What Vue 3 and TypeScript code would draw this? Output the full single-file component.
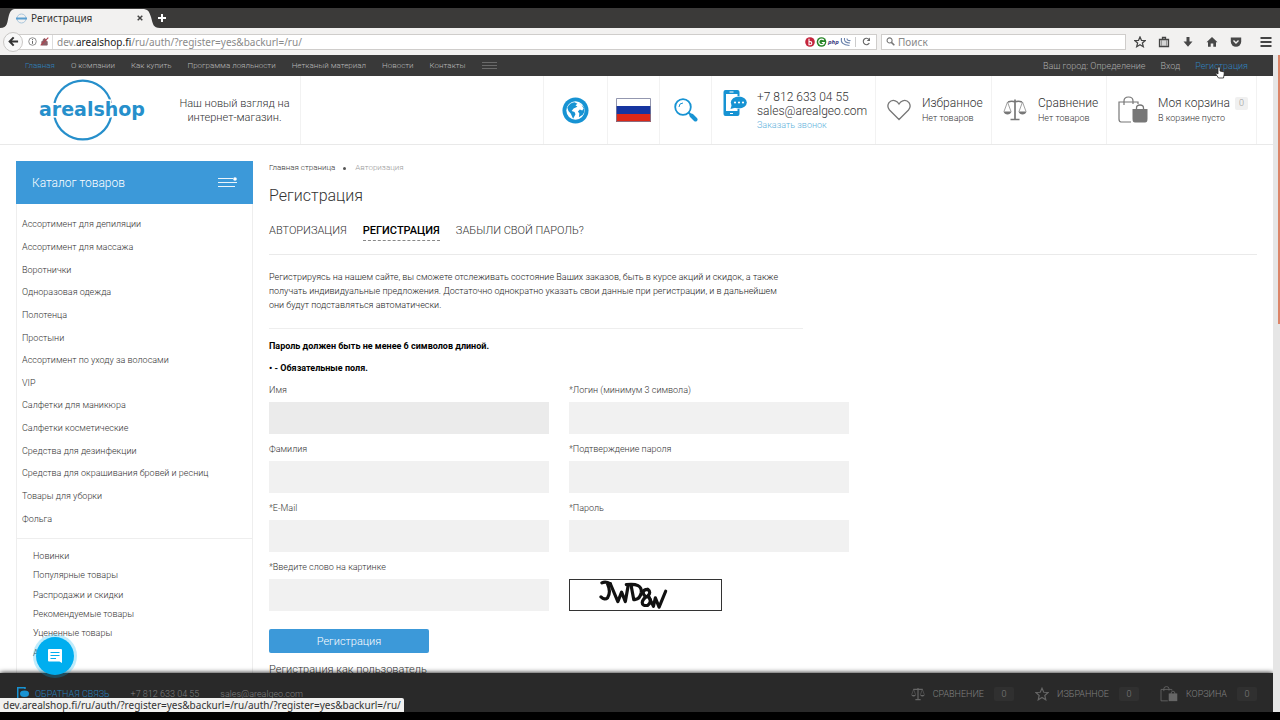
<script setup lang="ts">
interface Field {
  id: string
  label: string
  type: string
}

const menu: string[] = ['О компании', 'Как купить', 'Программа лояльности', 'Нетканый материал', 'Новости', 'Контакты']
const catalog: string[] = [
  'Ассортимент для депиляции', 'Ассортимент для массажа', 'Воротнички', 'Одноразовая одежда', 'Полотенца',
  'Простыни', 'Ассортимент по уходу за волосами', 'VIP', 'Салфетки для маникюра', 'Салфетки косметические',
  'Средства для дезинфекции', 'Средства для окрашивания бровей и ресниц', 'Товары для уборки', 'Фольга',
]
const collections: string[] = ['Новинки', 'Популярные товары', 'Распродажи и скидки', 'Рекомендуемые товары', 'Уцененные товары', 'Акции']
const fields: Field[] = [
  { id: 'name', label: 'Имя', type: 'text' },
  { id: 'login', label: '*Логин (минимум 3 символа)', type: 'text' },
  { id: 'surname', label: 'Фамилия', type: 'text' },
  { id: 'confirm', label: '*Подтверждение пароля', type: 'password' },
  { id: 'email', label: '*E-Mail', type: 'email' },
  { id: 'password', label: '*Пароль', type: 'password' },
  { id: 'captcha', label: '*Введите слово на картинке', type: 'text' },
]
</script>

<template>
  <div class="screen">
    <div class="tabs">
      <div class="tab">
        <svg class="tab-shape" viewBox="0 0 160 20" preserveAspectRatio="none"><path d="M0 20C8 20 7 14 9 7C11 1 13 1 18 1H142C148 1 149 3 151 9C153 16 153 20 160 20Z" fill="#f2f1f0" /></svg>
        <svg class="favicon" viewBox="0 0 11 11"><circle cx="5.5" cy="5.5" r="4.5" fill="none" stroke="#a9c6dc" /><path d="M0 5.5H11" stroke="#5b9fd0" stroke-width="2" /></svg>
        <span class="tab-title">Регистрация</span>
        <button class="tab-close" aria-label="Закрыть"><svg viewBox="0 0 6 6"><path d="M.7 .7L5.3 5.3M5.3 .7L.7 5.3" stroke="#444" stroke-width="1.5" /></svg></button>
      </div>
      <button class="tab-add" aria-label="Новая вкладка"><svg viewBox="0 0 8 8"><path d="M4 0V8M0 4H8" stroke="#fff" stroke-width="2" /></svg></button>
    </div>

    <div class="toolbar">
      <button class="back" aria-label="Назад"><svg viewBox="0 0 12 12"><path d="M6.2 1.5L1.8 6L6.2 10.5M2 6H11" fill="none" stroke="#333" stroke-width="2.2" /></svg></button>
      <div class="address">
        <svg class="i9" viewBox="0 0 10 10"><circle cx="5" cy="5" r="4.2" fill="none" stroke="#777" stroke-width=".9" /><path d="M5 4.3V7.6M5 2.3V3.4" stroke="#666" stroke-width="1.1" /></svg>
        <svg class="i9" viewBox="0 0 10 10"><path d="M2 5H8V9H2ZM3.4 5V3Q5 .5 6.6 3V5" fill="#8b6068" stroke="#8b6068" /><path d="M.8 9.2L9.2 .8" stroke="#b33f4b" stroke-width="1.2" /></svg>
        <span class="url">dev.<b>arealshop.fi</b>/ru/auth/?register=yes&amp;backurl=/ru/</span>
        <svg class="plugins" viewBox="0 0 46 10">
          <circle cx="5" cy="5" r="4.8" fill="#c4243c" /><path d="M4 1.8V7.8H5.2A1.5 1.5 0 0 0 5.2 4.6H4" fill="none" stroke="#fff" stroke-width="1.1" />
          <circle cx="16.5" cy="5" r="4.8" fill="#268526" /><path d="M18.8 3.2A2.8 2.8 0 1 0 19.3 5.5H16.8" fill="none" stroke="#fff" stroke-width="1.2" />
          <text x="23" y="7" font-size="6" font-style="italic" font-weight="bold" fill="#3b3b82">php</text>
          <path d="M36.5 1Q35 8 44.5 8.5M39.5 1Q38.5 6 45 6M42 1.5Q42 4 45.5 3.5" fill="none" stroke="#6b83ac" stroke-width="1.1" />
        </svg>
        <i class="rule"></i>
        <button class="reload" aria-label="Обновить"><svg viewBox="0 0 9 9"><path d="M7 2.5A3.2 3.2 0 1 0 7.3 6" fill="none" stroke="#666" stroke-width="1.1" /><path d="M8 .5V4H4.8Z" fill="#666" /></svg></button>
      </div>
      <label class="search">
        <svg viewBox="0 0 10 10"><circle cx="4" cy="3.8" r="2.8" fill="none" stroke="#777" stroke-width="1.2" /><path d="M6 6L9.3 9.2" stroke="#777" stroke-width="1.7" /></svg>
        <input type="text" placeholder="Поиск" aria-label="Поиск" />
      </label>
      <div class="tools">
        <button aria-label="Закладки"><svg viewBox="0 0 12 12"><path d="M6 1L7.5 4.4L11.2 4.7L8.4 7.1L9.3 10.7L6 8.8L2.7 10.7L3.6 7.1L.8 4.7L4.5 4.4Z" fill="none" stroke="#444" stroke-width="1.3" /></svg></button>
        <button aria-label="Библиотека"><svg viewBox="0 0 12 12"><path d="M1.5 3.5H10.5V10.5H1.5ZM4.5 3.5V1.500H7.5V3.5" fill="#d5d5d5" stroke="#444" stroke-width="1.3" /><path d="M3.5 4V10M8.5 4V10" stroke="#888" stroke-width=".8" /></svg></button>
        <button aria-label="Загрузки"><svg viewBox="0 0 12 12"><path d="M4.5 1H7.5V5.5H10.5L6 10.8L1.5 5.5H4.5Z" fill="#484848" /></svg></button>
        <button aria-label="Домой"><svg viewBox="0 0 12 12"><path d="M6 1L11.5 6.3H10V10.8H7.3V7.5H4.7V10.8H2V6.3H.5Z" fill="#484848" /></svg></button>
        <button aria-label="Pocket"><svg viewBox="0 0 12 12"><path d="M.8 1.5H11.2V5.5A5.2 5.2 0 0 1 .8 5.5Z" fill="#484848" /><path d="M3.5 4.5L6 7L8.5 4.5" fill="none" stroke="#f2f1f0" stroke-width="1.4" /></svg></button>
        <button class="menu-button" aria-label="Меню"><svg viewBox="0 0 12 12"><path d="M.5 2H11.5M.5 6H11.5M.5 10H11.5" stroke="#444" stroke-width="1.8" /></svg></button>
      </div>
    </div>

    <div class="viewport">
      <div class="site">
        <nav class="topnav">
          <div class="pages">
            <a href="#" class="active">Главная</a>
            <a v-for="item in menu" :key="item" href="#">{{ item }}</a>
            <button class="more" aria-label="Ещё"><svg viewBox="0 0 15 9"><path d="M0 1.5H15M0 4.5H15M0 7.5H15" stroke="#777" stroke-width=".8" /></svg></button>
          </div>
          <span class="city">Ваш город: <a href="#">Определение</a></span>
          <a href="#">Вход</a>
          <a href="#" class="register">Регистрация
            <svg class="pointer" viewBox="0 0 10 13"><path d="M3 8V1.5Q4 0 5 1.5V5L8.5 5.8Q9.6 6.2 9.2 8L8.5 12H3.5L.8 8Q.5 6.5 2 7.2Z" fill="#fff" stroke="#222" stroke-width=".8" /></svg>
          </a>
        </nav>

        <header class="header">
          <a href="#" class="logo" aria-label="arealshop">
            <svg viewBox="0 0 110 64">
              <path d="M15.5 25A29 29 0 0 1 72 25M15.5 39A29 29 0 0 0 72 39" fill="none" stroke="#268fcb" stroke-width="2.2" />
              <text x="0" y="38" font-size="19" class="logo-text">arealshop</text>
            </svg>
          </a>
          <p class="slogan">Наш новый взгляд на интернет-магазин.</p>
          <button class="cell globe" aria-label="Язык"><svg viewBox="0 0 28 28"><circle cx="14" cy="14" r="13.5" fill="#1793d3" /><circle cx="14" cy="14" r="9.5" fill="#fff" /><path d="M5.5 11Q8 6 13 5.5L16 7L14 8.5L16 10L12 12L10 14.5L13 15.5L14 18L11.5 22.5Q10 19 9 17Q6 15 5.5 11ZM17 6L20 8L22.5 12L21 14L18.5 13L16.5 15L18 17L17.5 21L21.5 18.5A9 9 0 0 0 22.5 10Z" fill="#1793d3" /></svg></button>
          <button class="cell flag" aria-label="Русский"><svg viewBox="0 0 35 24"><path d="M0 0H35V8H0Z" fill="#fff" /><path d="M0 8H35V16H0Z" fill="#1635a0" /><path d="M0 16H35V24H0Z" fill="#dd2817" /><path d="M.5 .5H34.5V23.5H.5Z" fill="none" stroke="#777c9a" stroke-width=".8" /></svg></button>
          <button class="cell find" aria-label="Поиск по сайту"><svg viewBox="0 0 24 24"><circle cx="9" cy="9" r="7.8" fill="none" stroke="#1793d3" stroke-width="1.8" /><path d="M5 9A4 4 0 0 1 9 5" fill="none" stroke="#1793d3" /><path d="M14.5 14.5L17 17" stroke="#1793d3" stroke-width="2" /><path d="M17.5 17.5L21.5 21.5" stroke="#1793d3" stroke-width="4" stroke-linecap="round" /></svg></button>
          <div class="cell phone">
            <svg viewBox="0 0 24 28"><path d="M2.5 1H14.5Q16.5 1 16.5 3V7H14.5V5H3V22H14.5V20H16.5V25Q16.5 27 14.5 27H2.5Q.5 27 .5 25V3Q.5 1 2.5 1Z" fill="#1793d3" /><path d="M6.5 3H10.5M7 24.5H10" stroke="#fff" /><ellipse cx="15.8" cy="13.5" rx="8" ry="6" fill="#1793d3" /><path d="M9 15L7.5 20L13 18.5Z" fill="#1793d3" /><circle cx="12" cy="13.5" r="1.1" fill="#fff" /><circle cx="16" cy="13.5" r="1.1" fill="#fff" /><circle cx="20" cy="13.5" r="1.1" fill="#fff" /></svg>
            <div><span>+7 812 633 04 55</span><span>sales@arealgeo.com</span><a href="#">Заказать звонок</a></div>
          </div>
          <a href="#" class="cell fav">
            <svg viewBox="0 0 24 22"><path d="M12 20.5L2.5 11Q-.5 7.5 2 3.7Q4.5 .5 8.3 1.8Q10.5 2.5 12 5Q13.5 2.5 15.7 1.8Q19.5 .5 22 3.7Q24.5 7.5 21.5 11Z" fill="none" stroke="#777" stroke-width="1.3" /></svg>
            <span class="info"><b>Избранное</b><small>Нет товаров</small></span>
          </a>
          <a href="#" class="cell cmp">
            <svg viewBox="0 0 24 22"><path d="M12 .5V20M5 3Q9 1.5 12 3Q15 1.5 19 3M7.5 20.5H16.5" fill="none" stroke="#777" stroke-width="1.7" /><path d="M4.5 3L1 12.5M4.5 3L8 12.5M19.5 3L16 12.5M19.5 3L23 12.5" stroke="#888" stroke-width=".8" /><path d="M.5 12.5H8.5Q7.5 15.5 4.5 15.5Q1.5 15.5 .5 12.5ZM15.5 12.5H23.5Q22.5 15.5 19.5 15.5Q16.5 15.5 15.5 12.5Z" fill="#777" /></svg>
            <span class="info"><b>Сравнение</b><small>Нет товаров</small></span>
          </a>
          <a href="#" class="cell cart">
            <svg viewBox="0 0 30 28"><path d="M13 26H3Q1 26 1 23V6H20V8M6 9V5Q6 1 10.5 1Q15 1 15 5V8" fill="none" stroke="#777" stroke-width="1.2" /><path d="M14.5 13H29.5V23Q29.5 26.5 27 26.5H17Q14.5 26.5 14.5 23Z" fill="#777" /><path d="M18.5 15V12Q18.5 9 22 9Q25.5 9 25.5 12V15" fill="none" stroke="#777" stroke-width="1.3" /></svg>
            <span class="info"><b>Моя корзина</b><small>В корзине пусто</small></span>
            <span class="zero">0</span>
          </a>
        </header>

        <div class="body">
          <aside class="side">
            <button class="side-head">Каталог товаров
              <svg viewBox="0 0 19 11"><path d="M0 1.5H15M0 5.5H19M0 9.5H17" stroke="#fff" stroke-width=".9" /><circle cx="17" cy="2" r="1.8" fill="#fff" /></svg>
            </button>
            <ul class="catalog"><li v-for="item in catalog" :key="item"><a href="#">{{ item }}</a></li></ul>
            <ul class="collections"><li v-for="item in collections" :key="item"><a href="#">{{ item }}</a></li></ul>
          </aside>

          <main class="main">
            <div class="crumbs"><a href="#">Главная страница</a><i></i><span>Авторизация</span></div>
            <h1>Регистрация</h1>
            <div class="auth-tabs"><a href="#">АВТОРИЗАЦИЯ</a><a href="#" class="current">РЕГИСТРАЦИЯ</a><a href="#">ЗАБЫЛИ СВОЙ ПАРОЛЬ?</a></div>
            <p class="intro">Регистрируясь на нашем сайте, вы сможете отслеживать состояние Ваших заказов, быть в курсе акций и скидок, а также получать индивидуальные предложения. Достаточно однократно указать свои данные при регистрации, и в дальнейшем они будут подставляться автоматически.</p>
            <p class="note">Пароль должен быть не менее 6 символов длиной.</p>
            <p class="note">• - Обязательные поля.</p>
            <form class="form" @submit.prevent>
              <div v-for="field in fields" :key="field.id" class="field">
                <label :for="field.id">{{ field.label }}</label>
                <input :id="field.id" :type="field.type" :class="{ focused: field.id === 'name' }" />
              </div>
              <div class="captcha">
                <svg viewBox="0 0 153 32" role="img" aria-label="Captcha">
                  <g fill="none" stroke="#111" stroke-width="3.4" stroke-linecap="round" stroke-linejoin="round">
                    <path d="M30 3Q34 1 39 4M36 4Q40 13 36 19Q33 22 29 18" />
                    <path d="M39 4L47 23L51 13L55 23L58 6" />
                    <path d="M61 5L64 21M56 5Q73 3 72 13Q71 20 65 21" />
                    <path d="M79 10Q74 10 74 14Q75 18 80 18Q84 23 79 27Q73 28 73 24Q74 19 79 17Q83 13 79 10" />
                    <path d="M80 18L85 28L87 19L91 29L98 12" />
                  </g>
                </svg>
              </div>
              <button class="submit" type="submit">Регистрация</button>
            </form>
            <h2>Регистрация как пользователь</h2>
          </main>
        </div>

        <footer class="dock">
          <a href="#" class="feedback"><svg viewBox="0 0 24 28"><path d="M16 4V1.5H1.5V26.5H16V22" fill="none" stroke="#1793d3" stroke-width="3" /><ellipse cx="15" cy="13.5" rx="9" ry="6.5" fill="#1793d3" /></svg>ОБРАТНАЯ СВЯЗЬ</a>
          <span>+7 812 633 04 55</span>
          <span>sales@arealgeo.com</span>
          <a href="#" class="dock-first"><svg viewBox="0 0 24 22"><path d="M12 .5V20M4 3H20M7.5 20.5H16.5" fill="none" stroke="#666" stroke-width="2" /><path d="M4.5 3L1 12.5M4.5 3L8 12.5M19.5 3L16 12.5M19.5 3L23 12.5" stroke="#666" /><path d="M.5 12.5H8.5Q4.5 18 .5 12.5ZM15.5 12.5H23.5Q19.5 18 15.5 12.5Z" fill="#666" /></svg>СРАВНЕНИЕ<em>0</em></a>
          <a href="#"><svg viewBox="0 0 24 24"><path d="M12 2L15 9L22.5 9.5L16.8 14.5L18.5 22L12 18L5.5 22L7.2 14.5L1.5 9.5L9 9Z" fill="none" stroke="#666" stroke-width="2" /></svg>ИЗБРАННОЕ<em>0</em></a>
          <a href="#"><svg class="dock-bag" viewBox="0 0 30 28"><path d="M13 26H1V6H20V8M6 9V5Q6 1 10.5 1Q15 1 15 5V8" fill="none" stroke="#666" stroke-width="1.5" /><path d="M14.5 13H29.5V26.5H14.5Z" fill="#666" /><path d="M18.5 14Q18.5 9 22 9Q25.5 9 25.5 14" fill="none" stroke="#666" stroke-width="1.5" /></svg>КОРЗИНА<em>0</em></a>
        </footer>
        <button class="chat" aria-label="Чат"><svg viewBox="0 0 14 14"><path d="M1 0H13Q14 0 14 1V14L11.5 12.5H1Q0 12.5 0 11.5V1Q0 0 1 0Z" fill="#fff" /><path d="M2.5 3.5H11.5M2.5 6.5H11.5M2.5 9.5H8" stroke="#00aeef" stroke-width="1.2" /></svg></button>
        <div class="status">dev.arealshop.fi/ru/auth/?register=yes&amp;backurl=/ru/auth/?register=yes&amp;backurl=/ru/</div>
      </div>
      <div class="scroll"><i></i></div>
    </div>
  </div>
</template>

<style>
body { margin: 0; background: #000; }
</style>

<style scoped>
* { box-sizing: border-box; }
.screen { height: 100vh; padding: 8px 0; background: #000; display: flex; flex-direction: column; font-family: Roboto, "Liberation Sans", sans-serif; font-weight: 300; overflow: hidden; }
a { color: inherit; text-decoration: none; }
button { border: 0; padding: 0; background: none; font: inherit; color: inherit; cursor: pointer; }
ul { list-style: none; margin: 0; padding: 0; }
svg { display: block; flex: none; }

.tabs, .toolbar, .status { font-family: "Noto Sans", "Open Sans", sans-serif; font-weight: 400; }
.tabs { flex: none; height: 20px; background: #3b3a39; display: flex; align-items: center; }
.tab { position: relative; width: 160px; height: 20px; display: flex; align-items: center; padding: 0 17px 0 16px; gap: 4px; }
.tab-shape { position: absolute; inset: 0; width: 100%; height: 100%; }
.favicon, .tab-title, .tab-close { position: relative; }
.favicon { width: 11px; height: 11px; }
.tab-title { flex: 1; font-size: 10px; color: #333; }
.tab-close svg { width: 6px; height: 6px; }
.tab-add { margin-left: -2px; }
.tab-add svg { width: 8px; height: 8px; }
.toolbar { flex: none; height: 27px; background: #f2f1f0; display: flex; align-items: center; padding-right: 8px; }
.back { z-index: 1; width: 20px; height: 20px; margin-left: 3px; border: 1px solid #c9c7c5; border-radius: 50%; background: #f8f8f8; display: grid; place-items: center; flex: none; }
.back svg { width: 11px; height: 11px; }
.address { flex: 1; height: 16px; margin-left: -4px; padding: 0 5px 0 8px; background: #fff; border: 1px solid #cfcdcb; display: flex; align-items: center; gap: 3px; }
.i9 { width: 9px; height: 9px; }
.url { flex: 1; font-size: 10px; line-height: 14px; color: #8a8a8a; padding-left: 4px; border-left: 1px solid #ddd; }
.url b { font-weight: 400; color: #222; }
.plugins { width: 46px; height: 10px; }
.rule { width: 1px; height: 10px; background: #ccc; margin: 0 3px 0 1px; }
.reload svg { width: 9px; height: 9px; }
.search { width: 245px; height: 16px; margin-left: 4px; padding: 0 4px; background: #fff; border: 1px solid #cfcdcb; display: flex; align-items: center; gap: 3px; }
.search svg { width: 9px; height: 9px; }
.search input { flex: 1; min-width: 0; border: 0; outline: 0; padding: 0; background: none; font: inherit; font-size: 10px; height: 14px; }
.search input::placeholder { color: #888; opacity: 1; }
.tools { display: flex; width: 138px; margin-left: 8px; gap: 12px; }
.tools .menu-button { margin-left: auto; }
.tools svg { width: 12px; height: 12px; }

.viewport { flex: 1; min-height: 0; display: flex; }
.site { position: relative; flex: 1; min-width: 0; background: #fff; overflow: hidden; color: #333; }
.scroll { width: 7px; background: #e6e6e6; display: flex; justify-content: flex-end; }
.scroll i { width: 2px; height: 41%; background: #dc8468; }

.topnav { height: 21px; background: #393939; color: #aaa; font-size: 9px; line-height: 20px; display: flex; align-items: center; padding: 0 25px; gap: 15px; white-space: nowrap; }
.pages { display: flex; align-items: center; gap: 16px; font-size: 8px; color: #b8b8b8; }
.active, .register { color: #2f82bf; }
.more svg { width: 15px; height: 9px; }
.city { margin-left: auto; }
.register { position: relative; }
.pointer { position: absolute; left: 20px; top: 10px; width: 10px; height: 13px; z-index: 3; }

.header { height: 69px; border-bottom: 1px solid #e9e9e9; display: flex; align-items: stretch; padding-right: 16px; white-space: nowrap; }
.logo { margin-left: 39px; padding-top: 2px; width: 110px; }
.logo svg { width: 110px; height: 64px; overflow: visible; }
.logo-text { font-family: "DejaVu Sans", sans-serif; font-weight: 700; fill: #268fcb; stroke: #fff; stroke-width: 3px; paint-order: stroke; }
.slogan { width: 152px; margin: 0 auto 0 0; padding: 21px 10px 0 30px; font-size: 11px; line-height: 14px; text-align: center; white-space: normal; border-right: 1px solid #f2f2f2; }
.cell { border-left: 1px solid #f2f2f2; display: flex; align-items: center; }
.globe { width: 64px; justify-content: center; }
.globe svg { width: 27px; height: 27px; }
.flag { width: 52px; justify-content: center; }
.flag svg { width: 35px; height: 24px; }
.find { width: 52px; justify-content: center; }
.find svg { width: 24px; height: 24px; }
.phone { width: 164px; padding: 14px 0 0 11px; align-items: flex-start; gap: 10px; }
.phone > svg { width: 24px; height: 28px; margin-top: -1px; }
.phone span, .phone a { display: block; font-size: 12px; line-height: 14px; }
.phone a { font-size: 9px; color: #62b2dc; }
.fav { width: 116px; padding-left: 11px; gap: 11px; }
.cmp { width: 115px; padding-left: 11px; gap: 11px; }
.cart { width: 151px; padding-left: 11px; gap: 10px; border-right: 1px solid #f2f2f2; }
.fav svg, .cmp svg { width: 24px; height: 22px; }
.cart svg { width: 30px; height: 28px; }
.info b { display: block; font-weight: 300; font-size: 12px; line-height: 16px; }
.info small { display: block; font-size: 9px; line-height: 14px; }
.zero { width: 13px; height: 13px; margin: -14px 0 0 -5px; background: #f0f0f0; border-radius: 2px; font-size: 9px; line-height: 13px; text-align: center; color: #999; }

.body { display: flex; gap: 16px; padding: 16px 16px 0; }
.side { width: 237px; flex: none; border: 1px solid #eee; border-top: 0; height: 620px; }
.side-head { width: 237px; height: 43px; margin-left: -1px; padding: 0 16px; background: #3c99d9; color: #fff; font-size: 12px; display: flex; align-items: center; justify-content: space-between; }
.side-head svg { width: 19px; height: 11px; }
.catalog { padding: 9px 5px 8px; font-size: 9px; border-bottom: 1px solid #eee; display: grid; grid-template-rows: repeat(14, 1fr); height: 335px; align-items: center; }
.collections { padding: 8px 16px; font-size: 9px; line-height: 19px; display: grid; height: 132px; align-items: center; }

.main { flex: 1; min-width: 0; }
.crumbs { display: flex; align-items: center; font-size: 8px; line-height: 14px; }
.crumbs i { width: 3px; height: 3px; border-radius: 50%; background: #555; margin: 0 9px 0 8px; }
.crumbs span { color: #999; }
h1 { margin: 10px 0 0; font-size: 16px; line-height: 22px; font-weight: 300; }
.auth-tabs { display: flex; gap: 16px; height: 33px; margin-top: 15px; border-bottom: 1px solid #eaeaea; font-size: 11px; line-height: 18px; }
.auth-tabs a { height: 19px; }
.auth-tabs .current { font-weight: 500; color: #000; border-bottom: 1px dashed #888; }
.intro { max-width: 534px; margin: 15px 0 9px; padding: 0 20px 16px 0; border-bottom: 1px solid #eee; font-size: 9px; line-height: 14px; color: #222; }
.note { margin: 0 0 6px; font-size: 9px; line-height: 16px; font-weight: 700; color: #000; }
.form { display: grid; grid-template-columns: 280px 280px; column-gap: 20px; }
.field { height: 59px; font-size: 9px; }
.field label { display: block; line-height: 16px; color: #333; }
.field input { display: block; width: 100%; height: 32px; margin-top: 4px; padding: 0 10px; border: 0; background: #f1f1f1; font: inherit; }
.field .focused { background: #ebebeb; }
.captcha svg { width: 153px; height: 32px; margin-top: 20px; border: 1px solid #333; }
.submit { grid-column: 1; width: 160px; height: 24px; margin-top: 11px; border-radius: 2px; background: #3c99d9; color: #fff; font-size: 11px; }
h2 { margin: 8px 0 0; font-size: 11px; line-height: 18px; font-weight: 300; }

.dock { position: absolute; left: 0; right: 0; bottom: 0; height: 39px; padding: 2px 16px 0; background: #292929; box-shadow: 0 0 5px #000; color: #808080; font-size: 9px; display: flex; align-items: center; gap: 21px; white-space: nowrap; }
.dock a { display: flex; align-items: center; gap: 8px; }
.dock svg { width: 14px; height: 14px; }
.dock .dock-bag { width: 18px; height: 16px; }
.dock .feedback { color: #2880bb; gap: 5px; }
.dock-first { margin-left: auto; }
.dock em { width: 20px; margin-left: 2px; background: #303030; border-radius: 2px; font-style: normal; font-size: 9px; line-height: 14px; text-align: center; }
.chat { position: absolute; left: 36px; bottom: 37px; width: 38px; height: 38px; border-radius: 50%; background: #00aeef; box-shadow: 0 0 0 3px rgba(0, 174, 239, .25); display: grid; place-items: center; }
.chat svg { width: 14px; height: 14px; }
.status { position: absolute; left: 0; bottom: 0; padding: 0 3px; background: #f1f1f0; color: #333; border-top-right-radius: 2px; font-size: 10px; line-height: 14px; }
</style>
